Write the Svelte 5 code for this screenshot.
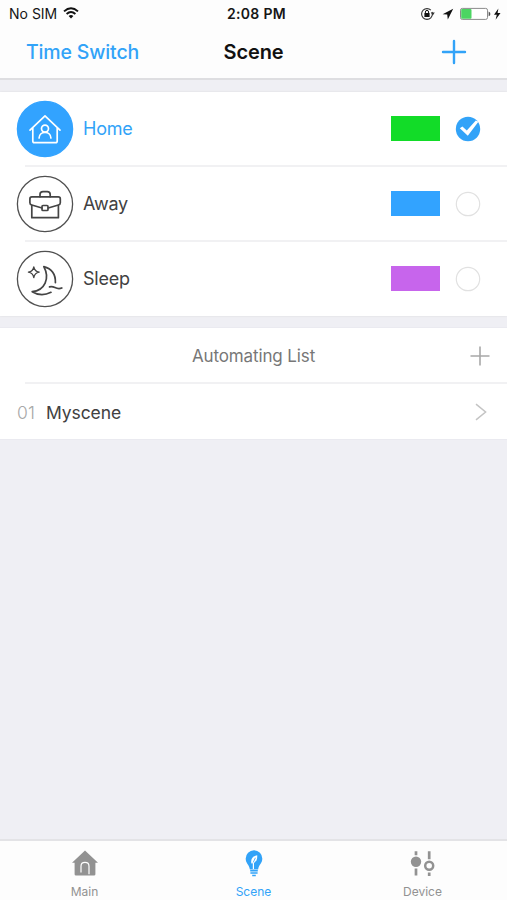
<script lang="ts">
	type Scene = { id: string; name: string; color: string };

	const scenes: Scene[] = [
		{ id: 'home', name: 'Home', color: '#12dc28' },
		{ id: 'away', name: 'Away', color: '#32a3ff' },
		{ id: 'sleep', name: 'Sleep', color: '#c765ec' }
	];
	const automations = ['Myscene'];
	const tabs = [
		{ id: 'main', label: 'Main' },
		{ id: 'scene', label: 'Scene' },
		{ id: 'device', label: 'Device' }
	];

	let selected = $state('home');
	let activeTab = $state('scene');
</script>

<div class="app">
	<header>
		<div class="status">
			<div class="carrier">
				<span>No SIM</span>
				<svg width="16" height="12" viewBox="0 0 16 12" fill="none" stroke="#111" stroke-width="1.9">
					<path d="M1 4.4Q8-1.8 15 4.4M3.6 7Q8 3 12.4 7" />
					<path d="M5.6 9Q8 7 10.4 9L8 11.5Z" fill="#111" stroke="none" />
				</svg>
			</div>
			<span class="time">2:08 PM</span>
			<svg class="indicators" width="84" height="16" viewBox="0 0 84 16">
				<circle cx="7" cy="8" r="5.4" fill="none" stroke="#333" stroke-width="1.1" stroke-dasharray="29 2 3 0" />
				<path d="M10.8 6.6h4l-2 2.8z" fill="#333" />
				<rect x="4.4" y="7" width="5.2" height="4" fill="#111" />
				<path d="M5.4 7V6a1.6 1.6 0 013.2 0v1" fill="none" stroke="#111" />
				<path d="M33.2 2.8L22.6 8.2l4.6.4.6 4.8z" fill="#111" />
				<rect x="40.5" y="2.4" width="27" height="11" rx="1.8" fill="#fff" stroke="#8b8b8b" />
				<rect x="41.2" y="3.1" width="10.3" height="9.6" rx="1" fill="#4cd562" />
				<path d="M68.6 5.6q1.8.6 1.8 2.3t-1.8 2.4z" fill="#555" />
				<path d="M78.4 2.4l-4.4 6.3h2.8l-1.2 5 4.9-6.6h-2.9z" fill="#111" />
			</svg>
		</div>
		<nav>
			<button class="time-switch">Time Switch</button>
			<h1>Scene</h1>
			<button class="add" aria-label="Add scene">
				<svg width="26" height="26" viewBox="0 0 26 26" stroke="#32a3f8" stroke-width="2.4" stroke-linecap="round">
					<path d="M13 2v22M2 13h22" />
				</svg>
			</button>
		</nav>
	</header>

	<main>
		<section class="scenes">
			{#each scenes as scene (scene.id)}
				<button class="row" class:selected={selected === scene.id} onclick={() => (selected = scene.id)}>
					<svg class="icon" width="58" height="58" viewBox="0 0 58 58">
						<circle class="disc" cx="29" cy="29" r="27.6" />
						<g class="lines">
							{#if scene.id === 'home'}
								<path d="M14 30.2L29 15.8l15 14.4M16.8 28v13q0 1.7 1.7 1.7h21q1.7 0 1.7-1.7V28" />
								<circle cx="29" cy="28.6" r="3.5" />
								<path d="M23.1 38c0-7.5 11.8-7.5 11.8 0" />
							{:else if scene.id === 'away'}
								<path d="M24 21.7v-2.2q0-2.9 3-2.9h4.2q3 0 3 2.9v2.2" />
								<path d="M26 33L15.8 30q-1.9-.5-1.9-2.3v-3.8q0-2 2-2h26.4q2 0 2 2v3.8q0 1.8-1.9 2.3L32.2 33" />
								<path d="M15.8 30.5v12.2h26.6V30.5" />
								<rect x="26" y="30.5" width="6" height="5" rx="1" />
							{:else}
								<path d="M17.8 16.8q.8 4.6 5.4 5.4-4.6.8-5.4 5.4-.8-4.6-5.4-5.4 4.6-.8 5.4-5.4z" stroke-width="1.3" />
								<path d="M39.4 32.6c.3-8.7-4.2-14-11.6-16 6.4 11.7 1 24-11.6 25.1q9 5.6 18.8.6" />
								<path d="M33.5 36.9c5-1.9 6.2 3.6 12.3 1.1" />
							{/if}
						</g>
					</svg>
					<span class="name">{scene.name}</span>
					<span class="swatch" style="background: {scene.color}"></span>
					<svg class="check" width="26" height="26" viewBox="0 0 26 26">
						{#if selected === scene.id}
							<circle cx="13" cy="13" r="12.2" fill="#32a3f8" />
							<path d="M4.8 12.2l2.6-1.6 4.4 3.8L20.8 4.6 23.4 5.8 12.8 19.8z" fill="#fff" />
						{:else}
							<circle cx="13" cy="13" r="11.7" fill="#fff" stroke="#e1e1e1" stroke-width="1.2" />
						{/if}
					</svg>
				</button>
			{/each}
		</section>

		<section class="automations">
			<div class="heading">
				<h2>Automating List</h2>
				<svg width="20" height="20" viewBox="0 0 20 20" stroke="#a8a8a8" stroke-width="1.6">
					<path d="M10 .5v19M.5 10h19" />
				</svg>
			</div>
			{#each automations as item, i}
				<div class="item">
					<span class="index">{String(i + 1).padStart(2, '0')}</span>
					<span class="title">{item}</span>
					<svg width="12" height="18" viewBox="0 0 12 18" fill="none" stroke="#c4c4c4" stroke-width="1.5">
						<path d="M1 1.2L10.6 9 1 16.8" />
					</svg>
				</div>
			{/each}
		</section>
	</main>

	<footer>
		{#each tabs as tab (tab.id)}
			<button class="tab" class:active={activeTab === tab.id} onclick={() => (activeTab = tab.id)}>
				<svg width="28" height="30" viewBox="0 0 28 30">
					{#if tab.id === 'main'}
						<path d="M14 1.4L1 13.8h2.6v11.4q0 1.4 1.4 1.4h18q1.4 0 1.4-1.4V13.8H27z" fill="currentColor" />
						<path d="M10 23.6v-6.4q0-3.8 4-3.8t4 3.8v8" fill="none" stroke="#fff" stroke-width="1.2" />
					{:else if tab.id === 'scene'}
						<path d="M14 1.2a8.3 8.3 0 00-8.3 8.5c0 4.7 3.4 5.6 4.2 10.8h8.2c.8-5.2 4.2-6.1 4.2-10.8A8.3 8.3 0 0014 1.2z" fill="currentColor" />
						<path d="M17.2 6.2c-4.9 1.2-6.7 4-5.8 8.3 4.7-.8 6.2-3.5 5.8-8.3z" fill="#fff" />
						<path d="M13.4 14v6" fill="none" stroke="#fff" stroke-width="1.2" />
						<path d="M15.4 8.8l-2.2 4.6" fill="none" stroke="currentColor" stroke-width=".8" />
						<path d="M10.2 21.7h7.6M10.4 24h7.2M12.2 26.6h3.6" fill="none" stroke="currentColor" stroke-width="1.5" />
					{:else}
						<path d="M7 2.3v4M7 19.5v7M20.2 2.3v8M20.2 23.6v3.3" fill="none" stroke="currentColor" stroke-width="2.7" />
						<circle cx="7" cy="12.8" r="5.2" fill="currentColor" />
						<circle cx="20.2" cy="16.8" r="4" fill="none" stroke="currentColor" stroke-width="2.5" />
					{/if}
				</svg>
				<span>{tab.label}</span>
			</button>
		{/each}
	</footer>
</div>

<style>
	:global(body) {
		background: #efeff4;
	}
	.app {
		height: 900px;
		display: flex;
		flex-direction: column;
		overflow: hidden;
		background: #efeff4;
		font-family: Inter, 'Liberation Sans', sans-serif;
		color: #414141;
	}
	button {
		border: none;
		background: none;
		padding: 0;
		margin: 0;
		font: inherit;
		color: inherit;
		text-align: left;
	}
	h1,
	h2 {
		margin: 0;
	}
	svg {
		display: block;
		flex: none;
	}
	header {
		height: 80px;
		box-sizing: border-box;
		border-bottom: 2px solid #dedee1;
		background: #fdfdfd;
	}
	.status {
		height: 27px;
		display: grid;
		grid-template-columns: 1fr auto 1fr;
		align-items: center;
		padding: 0 3px 0 9px;
		font-size: 14px;
		color: #161616;
	}
	.carrier {
		display: flex;
		align-items: center;
		gap: 6px;
	}
	.carrier svg {
		margin-bottom: 1px;
	}
	.time {
		font-weight: 600;
		letter-spacing: 0.3px;
	}
	.indicators {
		justify-self: end;
	}
	nav {
		height: 50px;
		display: grid;
		grid-template-columns: 1fr auto 1fr;
		align-items: center;
		padding: 0 26px;
	}
	.time-switch {
		font-size: 19.5px;
		font-weight: 500;
		letter-spacing: -0.15px;
		color: #32a3f8;
	}
	h1 {
		font-size: 20px;
		font-weight: 600;
		letter-spacing: -0.15px;
		color: #111;
	}
	.add {
		justify-self: end;
		margin-right: 14px;
	}
	main {
		flex: 1;
		padding-top: 12px;
	}
	.scenes {
		background: #fff;
		box-shadow: 0 0 2px #d9d9dc;
	}
	.row {
		width: 100%;
		height: 75px;
		box-sizing: border-box;
		display: flex;
		align-items: center;
		padding: 0 26px 2px 16px;
		font-size: 18px;
		letter-spacing: -0.25px;
		background: linear-gradient(#f1f1f3, #f1f1f3) 25px 100% / 100% 2px no-repeat;
	}
	.row:last-child {
		height: 74px;
		padding-bottom: 1px;
		background: none;
	}
	.disc {
		fill: #fff;
		stroke: #505050;
		stroke-width: 1.3;
	}
	.lines {
		fill: none;
		stroke: #444;
		stroke-width: 1.7;
		stroke-linejoin: round;
		stroke-linecap: round;
	}
	.selected .disc {
		fill: #32a3ff;
		stroke: #32a3ff;
	}
	.selected .lines {
		stroke: #fff;
	}
	.name {
		flex: 1;
		margin-left: 9px;
	}
	.selected .name {
		color: #32a3f8;
	}
	.swatch {
		width: 49px;
		height: 25px;
		margin-right: 15px;
	}
	.automations {
		margin-top: 12px;
		background: #fff;
		box-shadow: 0 0 1px #d5d5d8;
	}
	.heading {
		height: 56px;
		display: grid;
		grid-template-columns: 1fr auto 1fr;
		align-items: center;
		padding: 0 17px;
		background: linear-gradient(#f1f1f3, #f1f1f3) 25px 100% / 100% 2px no-repeat;
	}
	.heading h2 {
		grid-column: 2;
		font-size: 17px;
		font-weight: 400;
		letter-spacing: -0.12px;
		color: #777;
	}
	.heading svg {
		justify-self: end;
	}
	.item {
		height: 55px;
		box-sizing: border-box;
		display: flex;
		align-items: center;
		padding: 1px 20px 0 17px;
		font-size: 17.5px;
		letter-spacing: -0.1px;
	}
	.index {
		width: 29px;
		font-weight: 300;
		letter-spacing: 0.3px;
		color: #a8a8a8;
	}
	.title {
		flex: 1;
	}
	footer {
		height: 61px;
		box-sizing: border-box;
		display: flex;
		border-top: 2px solid #e3e3e6;
		background: #fdfdfd;
	}
	.tab {
		flex: 1;
		display: flex;
		flex-direction: column;
		align-items: center;
		padding-top: 8px;
		color: #929292;
		font-size: 12px;
		line-height: 14px;
	}
	.tab span {
		margin-top: 6px;
	}
	.active {
		color: #32a3f8;
	}
</style>
